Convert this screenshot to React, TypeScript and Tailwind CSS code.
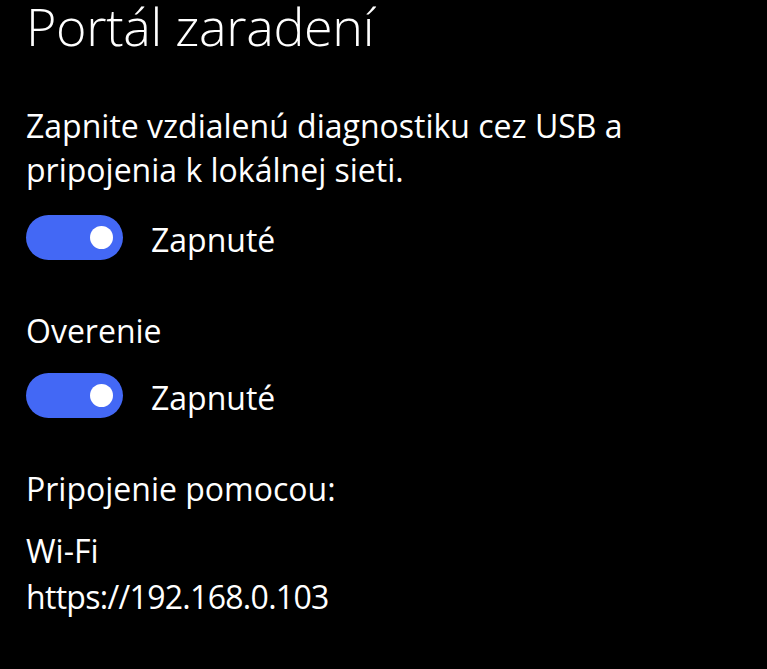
export default function App() {
  return (
    <div className="min-h-[669px] w-full bg-black text-white pl-[26px] pr-4 [font-family:'Open_Sans',Roboto,sans-serif]">
      <h1 className="font-light text-[52px] leading-[52px] tracking-[-0.3px]">Portál zaradení</h1>

      <p className="mt-[52px] text-[32px] leading-[44px]">
        Zapnite vzdialenú diagnostiku cez USB a
        <br />
        pripojenia k lokálnej sieti.
      </p>

      <ToggleRow label="Zapnuté" className="mt-[23px]" />

      <p className="mt-[49px] text-[32px] leading-[44px]">Overenie</p>

      <ToggleRow label="Zapnuté" className="mt-[20px]" />

      <p className="mt-[49px] text-[32px] leading-[44px]">Pripojenie pomocou:</p>

      <div className="mt-[17px] text-[32px] leading-[46px]">
        <p>Wi-Fi</p>
        <p className="tracking-[-0.7px]">https://192.168.0.103</p>
      </div>
    </div>
  )
}

function ToggleRow({ label, className }: { label: string; className?: string }) {
  return (
    <div className={`flex h-[45px] items-center gap-[28px] ${className ?? ''}`}>
      <div className="relative h-[45px] w-[97px] shrink-0 rounded-full bg-[#4368f5]">
        <span className="absolute right-[10px] top-[11px] h-[23px] w-[23px] rounded-full bg-white" />
      </div>
      <span className="mt-1 text-[32px] leading-[45px]">{label}</span>
    </div>
  )
}
